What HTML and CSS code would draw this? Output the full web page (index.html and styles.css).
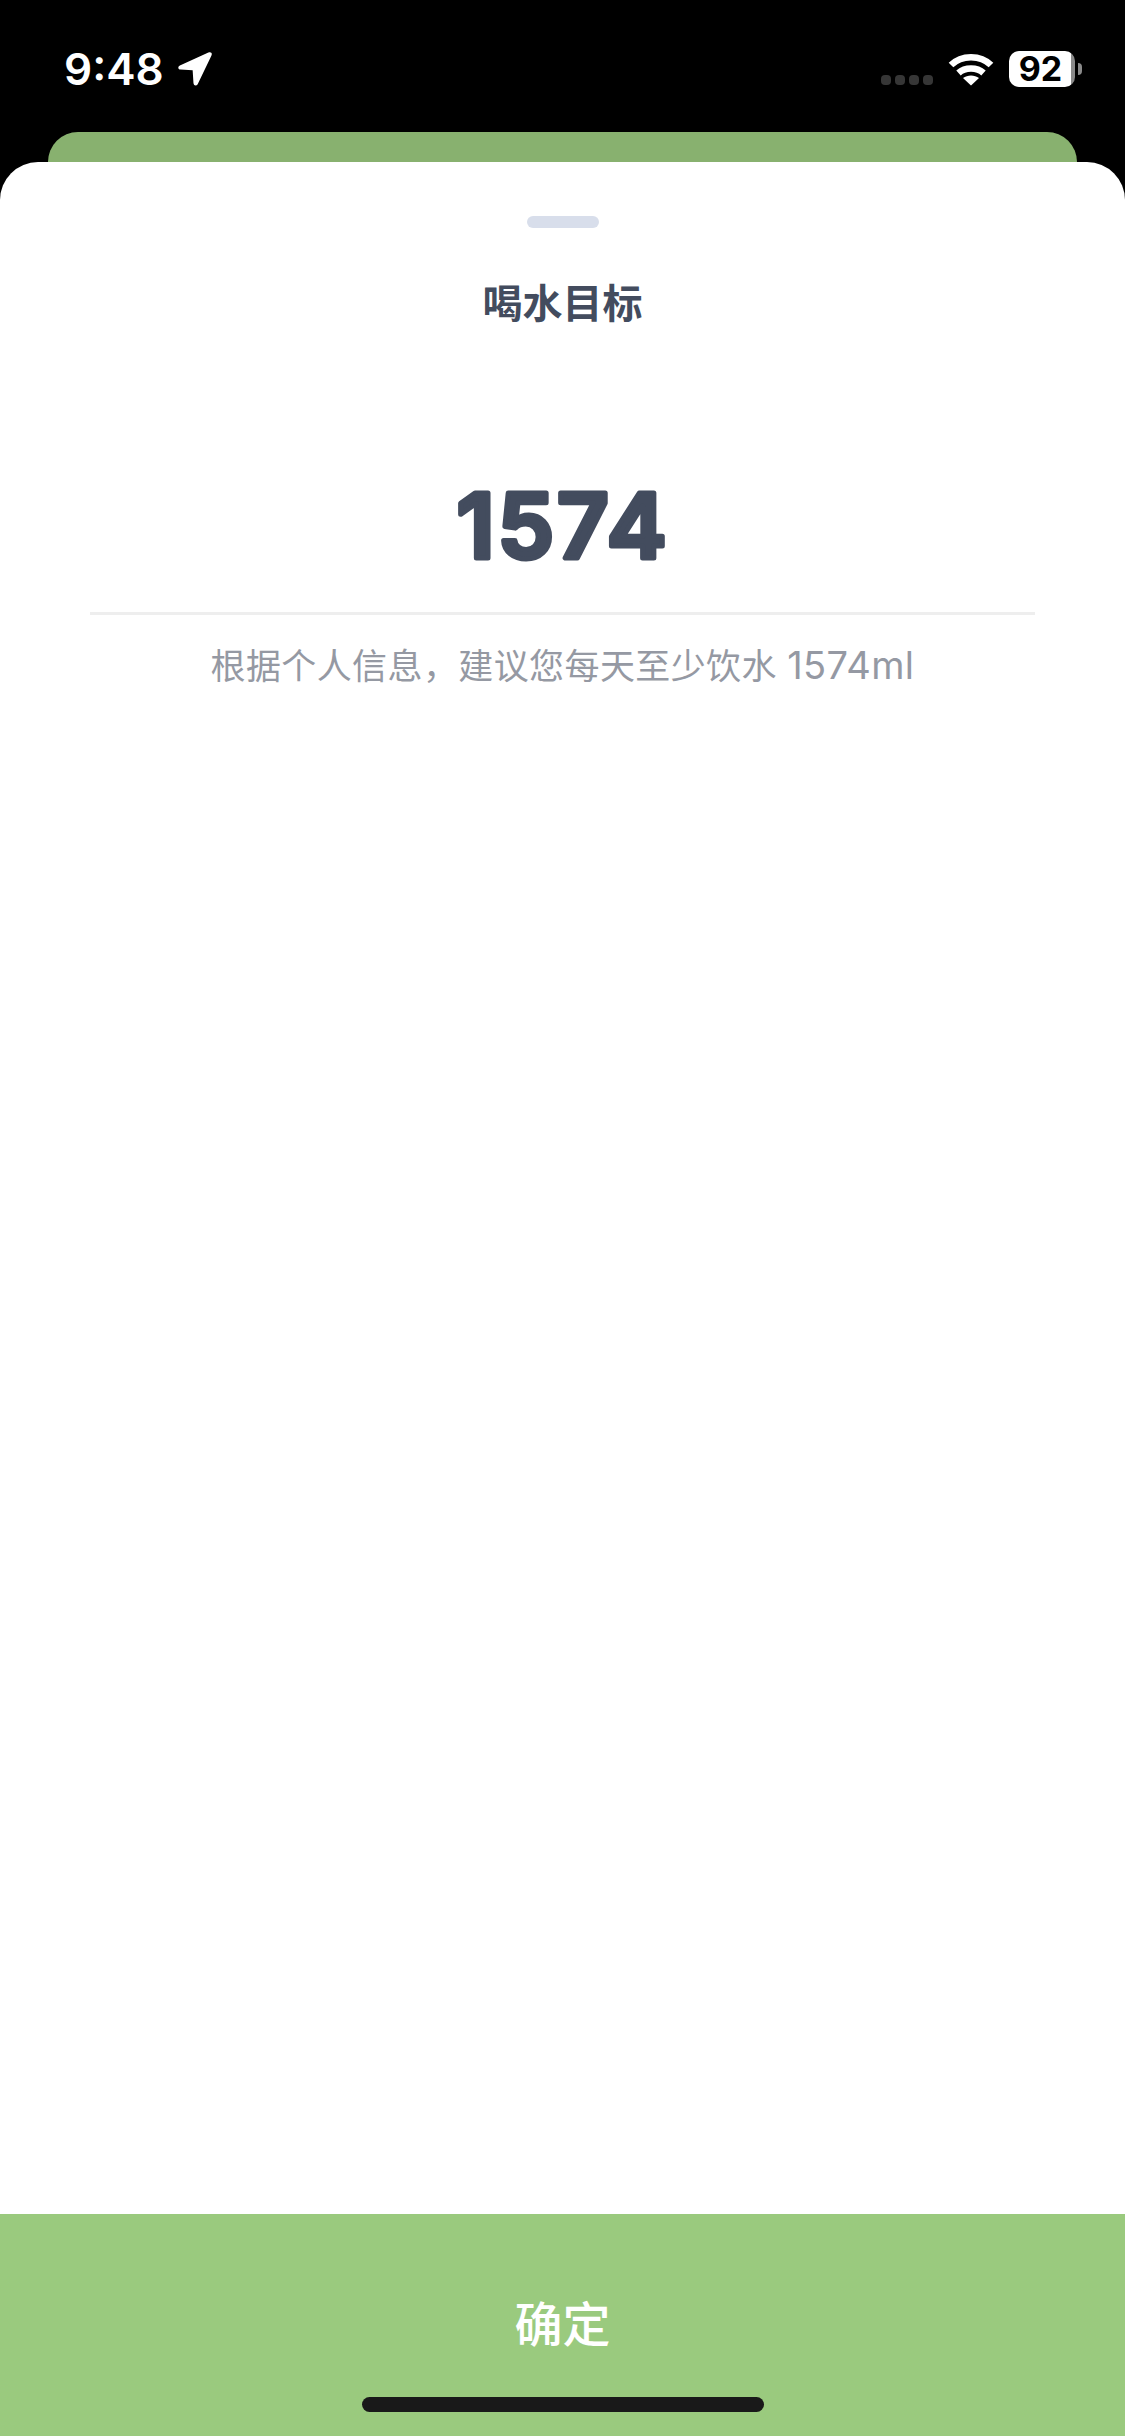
FILE: index.html
```html
<!DOCTYPE html>
<html lang="zh-CN">
<head>
    <meta charset="UTF-8">
    <title>喝水目标</title>
    <link rel="stylesheet" href="styles.css">
</head>
<body>
    <div class="status-bar">
        <div class="status-left">
            <span class="time">9:48</span>
            <svg class="location-icon" viewBox="0 0 34 35">
                <path d="M30.5 1.5 L2.8 14.2 C0.4 15.4 1 18 3.4 18.1 L15.2 18.6 L16 31 C16.2 33.8 19 34.3 20.2 32 L33.4 4.6 C34.6 2 33 .4 30.5 1.5Z" fill="#fff"/>
            </svg>
        </div>
        <div class="status-right">
            <div class="signal-dots">
                <span></span><span></span><span></span><span></span>
            </div>
            <svg class="wifi-icon" viewBox="0 0 46 34">
                <path d="M3 13 C13.5 2.5 32.5 2.5 43 13" fill="none" stroke="#fff" stroke-width="6.5"/>
                <path d="M10.5 21 C17 15 29 15 35.5 21" fill="none" stroke="#fff" stroke-width="6.5"/>
                <path d="M23 33.5 L15 26 C19.5 22.5 26.5 22.5 31 26Z" fill="#fff"/>
            </svg>
            <div class="battery">
                <div class="battery-body">92</div>
                <div class="battery-tip"></div>
            </div>
        </div>
    </div>

    <div class="sheet-behind"></div>

    <div class="sheet">
        <div class="sheet-handle"></div>
        <h1 class="sheet-title">喝水目标</h1>
        <svg class="goal-number" viewBox="0 0 300 120">
            <text x="150" y="100">1574</text>
        </svg>
        <div class="goal-divider"></div>
        <p class="goal-hint">根据个人信息，建议您每天至少饮水 <span class="goal-hint-value">1574ml</span></p>
    </div>

    <div class="confirm-bar">
        <div class="confirm-label">确定</div>
        <div class="home-indicator"></div>
    </div>
</body>
</html>
```

FILE: styles.css
```css
html, body {
    margin: 0;
    padding: 0;
}

body {
    width: 1125px;
    height: 2436px;
    background: #000;
    display: flex;
    flex-direction: column;
    font-family: Inter, "Noto Sans CJK SC", sans-serif;
    overflow: hidden;
}

.status-bar {
    height: 132px;
    box-sizing: border-box;
    padding: 51px 43px 0 64px;
    display: flex;
    justify-content: space-between;
    align-items: flex-start;
}

.status-left {
    display: flex;
    align-items: center;
    gap: 13px;
}

.time {
    color: #fff;
    font-size: 44px;
    font-weight: 600;
    line-height: 35px;
}

.location-icon {
    width: 35px;
    height: 36px;
}

.status-right {
    display: flex;
    align-items: center;
}

.signal-dots {
    display: flex;
    gap: 4px;
    margin: 22px 15px 0 0;
}

.signal-dots span {
    width: 10px;
    height: 10px;
    border-radius: 4px;
    background: #363636;
}

.wifi-icon {
    width: 46px;
    height: 34px;
    margin-right: 15px;
}

.battery {
    display: flex;
    align-items: center;
    gap: 3px;
}

.battery-body {
    width: 66px;
    height: 36px;
    box-sizing: border-box;
    padding-right: 3px;
    border-radius: 10px;
    background: linear-gradient(to right, #fff 62px, #8a8a8a 62px);
    color: #000;
    font-size: 34px;
    font-weight: 700;
    line-height: 36px;
    text-align: center;
}

.battery-tip {
    width: 4px;
    height: 12px;
    border-radius: 0 6px 6px 0;
    background: #8a8a8a;
}

.sheet-behind {
    height: 30px;
    margin: 0 48px;
    border-radius: 36px 36px 0 0;
    background: #88b16f;
}

.sheet {
    flex: 1;
    background: #fff;
    border-radius: 38px 38px 0 0;
    padding: 54px 90px 0;
    display: flex;
    flex-direction: column;
    align-items: center;
}

.sheet-handle {
    width: 72px;
    height: 12px;
    border-radius: 6px;
    background: #d8deeb;
}

.sheet-title {
    margin: 47px 0 0;
    color: #434c5e;
    font-size: 40px;
    font-weight: 600;
    line-height: 58px;
}

.goal-number {
    width: 300px;
    height: 120px;
    margin-top: 125px;
    overflow: visible;
}

.goal-number text {
    fill: #434c5e;
    stroke: #434c5e;
    stroke-width: 5px;
    stroke-linejoin: round;
    font-family: Inter, sans-serif;
    font-size: 90px;
    font-weight: 600;
    letter-spacing: 3px;
    text-anchor: middle;
}

.goal-divider {
    width: 100%;
    height: 3px;
    margin-top: 34px;
    background: #eeeeee;
}

.goal-hint {
    margin: 27px 0 0;
    color: #9599a3;
    font-size: 35px;
    letter-spacing: 0.4px;
    line-height: 46px;
}

.goal-hint-value {
    font-size: 38px;
}

.confirm-bar {
    height: 222px;
    box-sizing: border-box;
    background: #9aca7e;
    display: flex;
    flex-direction: column;
    align-items: center;
    padding-top: 80px;
}

.confirm-label {
    color: #fff;
    font-size: 48px;
    font-weight: 500;
    line-height: 62px;
}

.home-indicator {
    width: 402px;
    height: 15px;
    margin-top: 41px;
    border-radius: 8px;
    background: #191919;
}
```
